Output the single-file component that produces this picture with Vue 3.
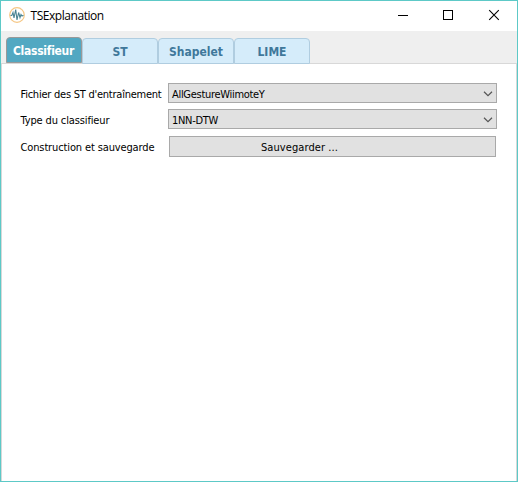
<script setup>
import { ref } from 'vue'

const tabs = ['Classifieur', 'ST', 'Shapelet', 'LIME']
const active = ref('Classifieur')
</script>

<template>
  <div class="window">
    <header class="titlebar">
      <svg class="logo" width="16" height="16" viewBox="0 0 16 16" fill="none">
        <circle cx="8" cy="8" r="7.3" stroke="#f5c785" stroke-width="1.2" />
        <path d="M1.5 8.5H2.8L4 5.5L5 11L6.7 2.5L8 13L9.6 5.5L11 10.5L12 7.5L13 9L14.5 8.3" stroke="#4a8492" stroke-width="1.1" />
      </svg>
      <span class="title">TSExplanation</span>
      <div class="controls">
        <svg width="46" height="30" viewBox="0 0 46 30"><path d="M18 14.5H28" stroke="#000" /></svg>
        <svg width="46" height="30" viewBox="0 0 46 30"><rect x="17.5" y="9.5" width="9" height="9" fill="none" stroke="#000" /></svg>
        <svg width="45" height="30" viewBox="0 0 45 30"><path d="M17.2 9.2L26.8 18.8M26.8 9.2L17.2 18.8" stroke="#000" stroke-width="1.1" /></svg>
      </div>
    </header>
    <nav class="tabs">
      <button
        v-for="tab in tabs"
        :key="tab"
        class="tab"
        :class="{ active: active === tab }"
        @click="active = tab"
      >{{ tab }}</button>
    </nav>
    <main class="pane">
      <div class="row">
        <span class="label tight">Fichier des ST d'entraînement</span>
        <div class="combo"><span>AllGestureWiimoteY</span>
          <svg width="10" height="6" viewBox="0 0 10 6"><path d="M1 0.8L5 4.6L9 0.8" fill="none" stroke="#555" stroke-width="1.2" /></svg>
        </div>
      </div>
      <div class="row">
        <span class="label">Type du classifieur</span>
        <div class="combo"><span>1NN-DTW</span>
          <svg width="10" height="6" viewBox="0 0 10 6"><path d="M1 0.8L5 4.6L9 0.8" fill="none" stroke="#555" stroke-width="1.2" /></svg>
        </div>
      </div>
      <div class="row last">
        <span class="label">Construction et sauvegarde</span>
        <button class="save">Sauvegarder ...</button>
      </div>
    </main>
  </div>
</template>

<style scoped>
.window {
  box-sizing: border-box;
  width: 518px;
  height: 482px;
  border: 1px solid #5dc9c7;
  background: #fff;
  display: flex;
  flex-direction: column;
  color: #000;
}
.titlebar {
  height: 30px;
  flex: none;
  display: flex;
}
.logo { margin: 6px 0 0 8px; }
.title {
  margin-left: 5.5px;
  font: 12px/30px "Open Sans", sans-serif;
  letter-spacing: -0.45px;
}
.controls { margin-left: auto; display: flex; }
.tabs {
  height: 32px;
  flex: none;
  display: flex;
  align-items: flex-end;
  padding-left: 5px;
  background: #efefef;
}
.tab {
  box-sizing: border-box;
  position: relative;
  width: 76px;
  height: 26px;
  margin-bottom: -1px;
  padding: 2px 0 0;
  border: 1px solid #b0cde0;
  border-radius: 4px 4px 0 0;
  background: #d5ecfa;
  color: #40789a;
  font: bold 12px/22px "DejaVu Sans Condensed", "DejaVu Sans", sans-serif;
  font-stretch: condensed;
}
.tab.active {
  margin-bottom: 0;
  border-color: #999;
  background: #52a8c2;
  color: #fff;
  letter-spacing: -0.28px;
  text-indent: -1px;
}
.pane {
  flex: 1;
  border: 1px solid #d8d8d8;
  border-bottom: 0;
  padding: 19px 19px 0 18px;
}
.row {
  display: flex;
  height: 20px;
  margin-bottom: 6px;
  font: 11px/20px "DejaVu Sans Condensed", "DejaVu Sans", sans-serif;
  font-stretch: condensed;
}
.row.last { height: 21px; margin-top: 7px; }
.label {
  box-sizing: border-box;
  width: 148px;
  flex: none;
  padding: 2px 0 0 0.5px;
  white-space: nowrap;
  letter-spacing: -0.13px;
}
.label.tight { letter-spacing: -0.24px; }
.combo {
  box-sizing: border-box;
  width: 329px;
  border: 1px solid #a9a9a9;
  background: #e1e1e1;
  display: flex;
  align-items: center;
  justify-content: space-between;
  padding: 0 3px;
  letter-spacing: -0.3px;
}
.combo span { padding-top: 4px; }
.combo svg { margin-top: 1px; }
.save {
  box-sizing: border-box;
  width: 327px;
  height: 21px;
  margin-left: 1px;
  padding: 2px 0 0 91px;
  border: 1px solid #a9a9a9;
  background: #e1e1e1;
  color: #000;
  font: inherit;
  line-height: 17px;
  letter-spacing: 0.08px;
  text-align: left;
}
</style>
